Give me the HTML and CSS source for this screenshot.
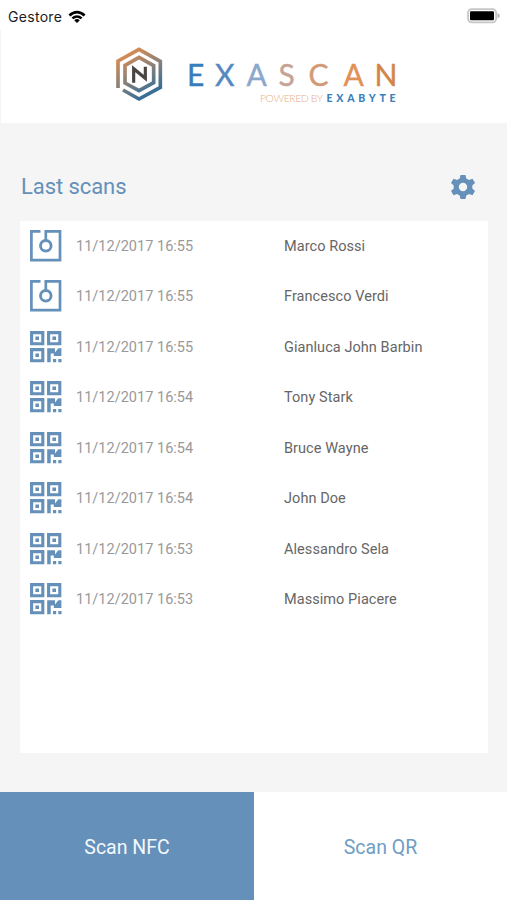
FILE: index.html
```html
<!DOCTYPE html>
<html lang="en">
<head>
<meta charset="utf-8">
<title>Exascan</title>
<link rel="stylesheet" href="styles.css">
</head>
<body>
<svg class="symbols" aria-hidden="true">
  <symbol id="nfc" viewBox="0 0 32 32">
    <path d="M10.5 1.4H1.4V30.2H30V1.4H15.8V10.5" fill="none" stroke="currentColor" stroke-width="2.7"/>
    <circle cx="15.8" cy="15.8" r="5.3" fill="none" stroke="currentColor" stroke-width="2.9"/>
  </symbol>
  <symbol id="qr" viewBox="0 0 32 32">
    <path d="M1.6 1.6H12.8V12.8H1.6ZM18.6 1.6H29.8V12.8H18.6ZM1.6 18.6H12.8V29.8H1.6Z" fill="none" stroke="currentColor" stroke-width="3.1"/>
    <path d="M5.4 5.4H9V9H5.4ZM22.4 5.4H26V9H22.4ZM5.4 22.4H9V26H5.4ZM17.2 17.2H25V21.5L28.3 17.2H31.4V25H23.8V22.5H20.7V31.2H17.2ZM23 28H26.2V31.2H23ZM28.3 28H31.5V31.2H28.3Z" fill="currentColor"/>
  </symbol>
</svg>
<div class="screen">
  <div class="status">
    <span>Gestore</span>
    <svg class="wifi" viewBox="0 0 18 13"><path d="M.5 4.5Q9-3 17.5 4.5L15.7 6.4Q9 .5 2.3 6.4ZM3.5 7.5Q9 2.8 14.5 7.5L12.7 9.3Q9 6.2 5.3 9.3ZM6.2 10.2Q9 7.8 11.8 10.2L9 13Z"/></svg>
    <svg class="battery" viewBox="0 0 34 16"><rect x="1.1" y="1.1" width="28" height="13.2" rx="3.5" fill="#fff" stroke="#c6c6c6" stroke-width="1.8"/><rect x="3" y="3.2" width="24" height="9" rx="1"/><path d="M30.5 5Q35 7.7 30.5 10.5Z" fill="#b5b5b5"/></svg>
  </div>
  <header class="brand">
    <svg class="mark" viewBox="0 0 210 210">
      <defs><linearGradient id="hex" gradientUnits="userSpaceOnUse" x1="60" y1="40" x2="140" y2="175"><stop offset="0" stop-color="#d98b51"/><stop offset=".45" stop-color="#8b8179"/><stop offset="1" stop-color="#236b9d"/></linearGradient></defs>
      <path d="M36 144V63L99 28L163 64V142L99 177L51 150" fill="none" stroke="url(#hex)" stroke-width="11"/>
      <path d="M57 76L99 52L143 77V128L99 152L57 129Z" fill="none" stroke="url(#hex)" stroke-width="11"/>
      <path d="M83 128V86L118 115V80" fill="none" stroke="#4b4542" stroke-width="9.5"/>
    </svg>
    <svg class="wordmark" viewBox="180 55 230 55">
      <g class="name"><text x="187" y="86.3" fill="#377dbb" stroke="#377dbb">E</text><text x="215" y="86.3" fill="#5589c0" stroke="#5589c0">X</text><text x="246.5" y="86.3" fill="#8ca7cc" stroke="#8ca7cc">A</text><text x="278.5" y="86.3" fill="#c7a395" stroke="#c7a395">S</text><text x="308.5" y="86.3" fill="#d29a76" stroke="#d29a76">C</text><text x="343.5" y="86.3" fill="#e19158" stroke="#e19158">A</text><text x="374.5" y="86.3" fill="#d38449" stroke="#d38449">N</text></g>
      <text class="powered" x="260" y="102.3" textLength="63">POWERED BY</text>
      <text class="company" x="326.5" y="102.3" textLength="69">EXABYTE</text>
    </svg>
  </header>
  <main class="content">
    <div class="heading">
      <h1>Last scans</h1>
      <svg class="gear" viewBox="0 0 24 24"><path fill-rule="evenodd" d="M9.5 0H14.5L15.3 3.5L18 5L21.5 3.8L24 8.1L21.3 10.6V13.4L24 15.9L21.5 20.2L18 19L15.3 20.5L14.5 24H9.5L8.7 20.5L6 19L2.5 20.2L0 15.9L2.7 13.4V10.6L0 8.1L2.5 3.8L6 5L8.7 3.5ZM12 7.8A4.2 4.2 0 1 0 12 16.2A4.2 4.2 0 1 0 12 7.8Z"/></svg>
    </div>
    <ul class="scans">
      <li><svg><use href="#nfc"/></svg><time>11/12/2017 16:55</time><span>Marco Rossi</span></li>
      <li><svg><use href="#nfc"/></svg><time>11/12/2017 16:55</time><span>Francesco Verdi</span></li>
      <li><svg><use href="#qr"/></svg><time>11/12/2017 16:55</time><span>Gianluca John Barbin</span></li>
      <li><svg><use href="#qr"/></svg><time>11/12/2017 16:54</time><span>Tony Stark</span></li>
      <li><svg><use href="#qr"/></svg><time>11/12/2017 16:54</time><span>Bruce Wayne</span></li>
      <li><svg><use href="#qr"/></svg><time>11/12/2017 16:54</time><span>John Doe</span></li>
      <li><svg><use href="#qr"/></svg><time>11/12/2017 16:53</time><span>Alessandro Sela</span></li>
      <li><svg><use href="#qr"/></svg><time>11/12/2017 16:53</time><span>Massimo Piacere</span></li>
    </ul>
  </main>
  <nav class="actions">
    <button class="primary">Scan NFC</button>
    <button>Scan QR</button>
  </nav>
</div>
</body>
</html>
```
FILE: styles.css
```css
* { box-sizing: border-box; }
body { margin: 0; font-family: Roboto, sans-serif; }
.symbols { display: none; }
.screen { height: 900px; display: flex; flex-direction: column; background: #f5f5f5; }
.status { height: 30px; padding: 2px 6px 0 8px; display: flex; align-items: center; background: #fff; font: 14px Inter, sans-serif; letter-spacing: .3px; color: #1c1c1c; }
.wifi { width: 18px; height: 13px; margin-left: 6px; }
.battery { width: 34px; height: 16px; margin-left: auto; }
.brand { height: 93px; padding: 10px 0 0 105px; display: flex; background: #fff; border-left: 1px solid #f4f4f4; }
.mark { width: 70px; height: 70px; }
.wordmark { width: 230px; height: 55px; margin: 15px 0 0 4px; }
.name { font: 30px Lato, sans-serif; stroke-width: .4px; }
.powered { font: 300 10.5px Lato, sans-serif; fill: #e5b18c; }
.company { font: 900 10.5px Lato, sans-serif; fill: #3b7fbd; }
.content { flex: 1; padding: 44px 19px 39px 20px; display: flex; flex-direction: column; }
.heading { height: 54px; padding: 0 13px 14px 1px; display: flex; align-items: center; justify-content: space-between; }
h1 { margin: -2px 0 0; font-size: 22px; font-weight: 400; letter-spacing: -.07px; color: #6490ba; }
.gear { width: 24px; height: 24px; fill: #6490ba; }
.scans { flex: 1; margin: 0; padding: 1px 0 0; list-style: none; background: #fff; }
.scans li { height: 50.5px; padding: 0 0 2px 10px; display: grid; grid-template-columns: 46px 208px 1fr; align-items: center; font-size: 14.5px; color: #666; }
.scans svg { width: 32px; height: 32px; margin-top: -1px; color: #6490ba; }
.scans time { color: #999; letter-spacing: .02px; }
.scans span { letter-spacing: .06px; }
.actions { height: 108px; display: grid; grid-template-columns: 254px 1fr; }
.actions button { border: 0; padding: 2px 0 0; background: #fff; color: #709dc5; font: 19.5px Roboto, sans-serif; }
.actions .primary { background: #6490ba; color: #f4f8fc; }
```
